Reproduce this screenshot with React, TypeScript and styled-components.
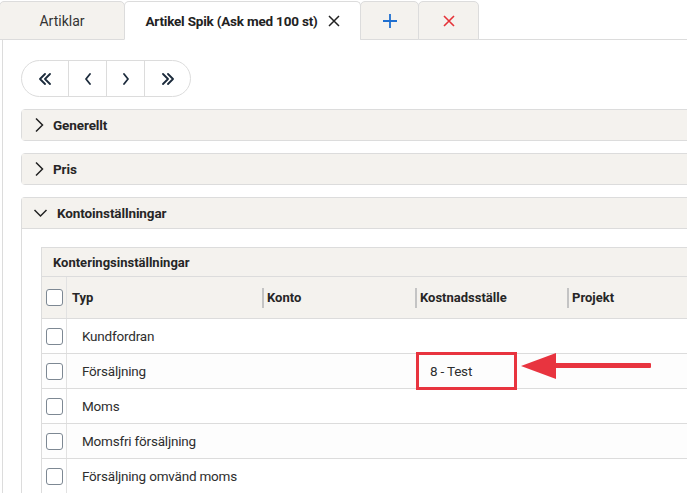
import React from "react";
import styled, { createGlobalStyle } from "styled-components";

const Global = createGlobalStyle`
  html, body { margin: 0; padding: 0; background: #fff; }
  body { font-family: Roboto, "Liberation Sans", Arial, sans-serif; color: #2a2a2a; overflow: hidden; }
  * { box-sizing: border-box; }
`;

const Page = styled.div`
  width: 687px;
  height: 493px;
  overflow: hidden;
  position: relative;
`;

const TabBar = styled.div`
  display: flex;
  align-items: flex-end;
  height: 40px;
  padding-top: 1px;
  border-bottom: 1px solid #dcdcdc;
`;

const Tab = styled.div<{ $active?: boolean; $w: number }>`
  width: ${(p) => p.$w}px;
  height: 39px;
  margin-bottom: -1px;
  display: flex;
  align-items: center;
  justify-content: center;
  gap: 10px;
  border: 1px solid #dcdcdc;
  border-bottom: ${(p) => (p.$active ? "1px solid #fff" : "1px solid #dcdcdc")};
  border-radius: 5px 5px 0 0;
  background: ${(p) => (p.$active ? "#fff" : "#f4f2ee")};
  font-size: ${(p) => (p.$active ? "13.5px" : "14px")};
  letter-spacing: ${(p) => (p.$active ? "-0.2px" : "0")};
  font-weight: ${(p) => (p.$active ? 700 : 400)};
  color: ${(p) => (p.$active ? "#222" : "#333")};
  & + & { margin-left: -1px; }
`;

const Content = styled.div`
  border-left: 1px solid #dcdcdc;
  margin-left: 2px;
  padding: 20px 0 0 18px;
  height: 454px;
  position: relative;
`;

const Pager = styled.div`
  display: inline-flex;
  height: 37px;
  border: 1px solid #dcdcdc;
  border-radius: 19px;
  overflow: hidden;
`;

const PagerBtn = styled.div<{ $w: number }>`
  width: ${(p) => p.$w}px;
  display: flex;
  align-items: center;
  justify-content: center;
  color: #1c2b3c;
  & + & { border-left: 1px solid #dcdcdc; }
`;

const Stack = styled.div`
  margin-top: 12px;
  width: 700px;
  display: flex;
  flex-direction: column;
  gap: 12px;
`;

const Section = styled.div<{ $open?: boolean }>`
  border: 1px solid #dcdcdc;
  border-radius: 4px;
  ${(p) => (p.$open ? "border-bottom: none; border-radius: 4px 4px 0 0;" : "")}
`;

const SectionHead = styled.div<{ $open?: boolean }>`
  height: 30px;
  background: #f4f2ee;
  display: flex;
  align-items: center;
  gap: ${(p) => (p.$open ? 9 : 8)}px;
  padding-left: ${(p) => (p.$open ? 11 : 11)}px;
  font-size: 13.5px;
  letter-spacing: -0.1px;
  font-weight: 700;
  color: #262626;
`;

const SectionBody = styled.div`
  border-top: 1px solid #dcdcdc;
  padding: 18px 0 0 19px;
`;

const Grid = styled.div`
  border: 1px solid #dcdcdc;
  border-right: none;
`;

const GridTitle = styled.div`
  height: 29px;
  background: #f4f2ee;
  display: flex;
  align-items: center;
  padding-left: 11px;
  font-size: 13px;
  font-weight: 700;
  color: #262626;
  border-bottom: 1px solid #dcdcdc;
`;

const Row = styled.div<{ $head?: boolean; $alt?: boolean }>`
  display: grid;
  grid-template-columns: 25px 195px 153px 152px 1fr;
  height: ${(p) => (p.$head ? "42px" : "35px")};
  background: ${(p) => (p.$head ? "#f4f2ee" : p.$alt ? "#fdfdfd" : "#fff")};
  border-bottom: 1px solid #dcdcdc;
  font-size: ${(p) => (p.$head ? "13px" : "13.5px")};
  letter-spacing: ${(p) => (p.$head ? "0" : "-0.2px")};
  font-weight: ${(p) => (p.$head ? 700 : 400)};
  color: ${(p) => (p.$head ? "#262626" : "#2e2e2e")};
`;

const CheckCell = styled.div`
  display: flex;
  align-items: center;
  justify-content: center;
  border-right: 1px solid #e2e2e2;
`;

const Check = styled.div`
  width: 17px;
  height: 17px;
  border: 1.5px solid #7d8893;
  border-radius: 3px;
  background: #fff;
`;

const Cell = styled.div<{ $pad?: number; $sep?: boolean }>`
  display: flex;
  align-items: center;
  padding-left: ${(p) => p.$pad ?? 15}px;
  position: relative;
  ${(p) =>
    p.$sep
      ? `&::before { content: ""; position: absolute; left: 0; top: 11px; height: 20px; width: 2px; background: #c4c4c4; }`
      : ""}
`;

const Highlight = styled.div`
  position: absolute;
  left: 413px;
  top: 312px;
  width: 101px;
  height: 38px;
  border: 3px solid #e8343f;
`;

const Arrow = styled.svg`
  position: absolute;
  left: 515px;
  top: 311px;
`;

const ChevRight = () => (
  <svg width="12" height="16" viewBox="0 0 12 16">
    <path d="M3 1.5 L9.5 8 L3 14.5" fill="none" stroke="#222" strokeWidth="1.5" />
  </svg>
);
const ChevDown = () => (
  <svg width="15" height="10" viewBox="0 0 15 10">
    <path d="M1.5 2 L7.5 8 L13.5 2" fill="none" stroke="#222" strokeWidth="1.5" />
  </svg>
);

const PagerIcon = ({ d }: { d: string }) => (
  <svg width="16" height="12" viewBox="0 0 16 12">
    <path d={d} fill="none" stroke="#1c2b3c" strokeWidth="1.8" strokeLinecap="round" strokeLinejoin="round" />
  </svg>
);

const rows = [
  "Kundfordran",
  "Försäljning",
  "Moms",
  "Momsfri försäljning",
  "Försäljning omvänd moms",
];

export default function App() {
  return (
    <Page>
      <Global />
      <TabBar>
        <Tab $w={126} style={{ marginLeft: -1 }}>Artiklar</Tab>
        <Tab $w={237} $active>
          Artikel Spik (Ask med 100 st)
          <svg width="12" height="12" viewBox="0 0 12 12">
            <path d="M1 1 L11 11 M11 1 L1 11" stroke="#222" strokeWidth="1.5" />
          </svg>
        </Tab>
        <Tab $w={59}>
          <svg width="14" height="14" viewBox="0 0 14 14">
            <path d="M7 0 V14 M0 7 H14" stroke="#1f6fd0" strokeWidth="1.8" />
          </svg>
        </Tab>
        <Tab $w={61}>
          <svg width="12" height="12" viewBox="0 0 12 12">
            <path d="M1 1 L11 11 M11 1 L1 11" stroke="#e53238" strokeWidth="1.6" />
          </svg>
        </Tab>
      </TabBar>
      <Content>
        <Pager>
          <PagerBtn $w={46}><PagerIcon d="M8 1 L3 6 L8 11 M13 1 L8 6 L13 11" /></PagerBtn>
          <PagerBtn $w={38}><PagerIcon d="M10 1 L6 6 L10 11" /></PagerBtn>
          <PagerBtn $w={38}><PagerIcon d="M6 1 L10 6 L6 11" /></PagerBtn>
          <PagerBtn $w={46}><PagerIcon d="M3 1 L8 6 L3 11 M8 1 L13 6 L8 11" /></PagerBtn>
        </Pager>
        <Stack>
          <Section>
            <SectionHead><ChevRight />Generellt</SectionHead>
          </Section>
          <Section>
            <SectionHead><ChevRight />Pris</SectionHead>
          </Section>
          <Section $open>
            <SectionHead $open><ChevDown />Kontoinställningar</SectionHead>
            <SectionBody>
              <Grid>
                <GridTitle>Konteringsinställningar</GridTitle>
                <Row $head>
                  <CheckCell><Check /></CheckCell>
                  <Cell $pad={5}>Typ</Cell>
                  <Cell $pad={5} $sep>Konto</Cell>
                  <Cell $pad={5} $sep>Kostnadsställe</Cell>
                  <Cell $pad={5} $sep>Projekt</Cell>
                </Row>
                {rows.map((r, i) => (
                  <Row key={r} $alt={i % 2 === 1}>
                    <CheckCell><Check /></CheckCell>
                    <Cell>{r}</Cell>
                    <Cell />
                    <Cell>{i === 1 ? "8 - Test" : ""}</Cell>
                    <Cell />
                  </Row>
                ))}
              </Grid>
            </SectionBody>
          </Section>
        </Stack>
        <Highlight />
        <Arrow width="140" height="30" viewBox="0 0 140 30">
          <polygon points="3,15 38,2 38,28" fill="#e8343f" />
          <rect x="36" y="12" width="97" height="5" rx="1" fill="#e8343f" />
        </Arrow>
      </Content>
    </Page>
  );
}
